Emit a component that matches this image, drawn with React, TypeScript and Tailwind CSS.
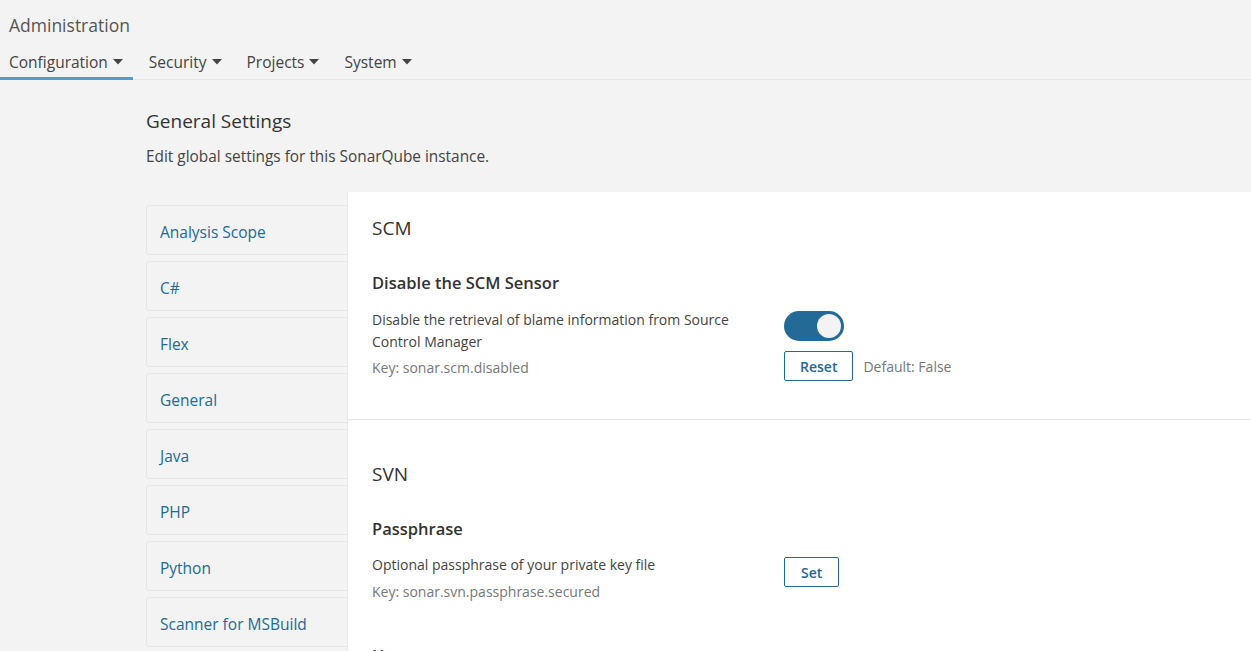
import { useState } from "react";

const categories = [
  "Analysis Scope",
  "C#",
  "Flex",
  "General",
  "Java",
  "PHP",
  "Python",
  "Scanner for MSBuild",
  "SCM",
];

const tabs = ["Configuration", "Security", "Projects", "System"];

function Caret() {
  return (
    <svg width="10" height="6" viewBox="0 0 10 6" className="ml-[5px] inline-block">
      <path d="M0 0 L10 0 L5 5.5 Z" fill="currentColor" />
    </svg>
  );
}

function Toggle() {
  const [on, setOn] = useState(true);
  return (
    <button
      onClick={() => setOn(!on)}
      className={`flex h-[30px] w-[60px] items-center rounded-full px-[3px] ${on ? "justify-end bg-[#236a97]" : "justify-start bg-[#ccc]"}`}
    >
      <span className="h-[24px] w-[24px] rounded-full bg-[#f3f3f3]" />
    </button>
  );
}

export default function App() {
  return (
    <div className="h-[651px] overflow-hidden bg-[#f3f3f3] text-[#444] font-['Open_Sans',sans-serif]">
      {/* Page header */}
      <header className="border-b border-[#e6e6e6]">
        <h1 className="pl-[9px] pt-[12px] text-[17.5px] leading-[26px] text-[#555]">Administration</h1>
        <nav className="mt-[13px] flex text-[15.5px] leading-[22px] text-[#444]">
          {tabs.map((t, i) => (
            <div
              key={t}
              className={`flex items-center ${i === 0 ? "border-b-[3px] border-[#4b9fd5] pl-[9px] pr-[10px] pb-[4px] -mb-px" : i === 1 ? "pl-[16px] pr-[11px] pb-[6px]" : "pl-[14px] pr-[11px] pb-[6px]"}`}
            >
              {t}
              <Caret />
            </div>
          ))}
        </nav>
      </header>

      <div className="pl-[146px]">
        <h2 className="pt-[28px] text-[19px] leading-[26px] text-[#333]">General Settings</h2>
        <p className="mt-[12px] text-[15.4px] leading-[22px] text-[#444]">Edit global settings for this SonarQube instance.</p>

        <div className="mt-[24px] flex">
          {/* Category list */}
          <ul className="mt-[13px] w-[210px] -mr-[9px] flex flex-col gap-[6px]">
            {categories.map((c) => (
              <li
                key={c}
                className="flex h-[50px] items-center rounded-[3px] border border-[#e6e6e6] pl-[13px] pt-[5px] text-[15.5px] text-[#236a97]"
              >
                {c}
              </li>
            ))}
          </ul>

          {/* Settings panel */}
          <div className="relative z-10 flex-1 border-l border-[#e6e6e6] bg-white">
            <section className="border-b border-[#e6e6e6] pb-[38px] pl-[24px] pt-[23px]">
              <h3 className="text-[19px] leading-[26px] text-[#333]">SCM</h3>
              <h4 className="mt-[31px] text-[16.5px] font-semibold leading-[22px] text-[#333]">Disable the SCM Sensor</h4>
              <div className="mt-[15px] flex">
                <div className="w-[412px] text-[14px] leading-[22px]">
                  <p className="w-[390px]">Disable the retrieval of blame information from Source Control Manager</p>
                  <p className="mt-[4px] text-[#777]">Key: sonar.scm.disabled</p>
                </div>
                <div className="flex flex-col items-start gap-[10px] pt-[2px]">
                  <Toggle />
                  <div className="flex items-center gap-[10px]">
                    <button className="h-[30px] rounded-[2px] border border-[#236a97] px-[15px] text-[14px] font-semibold text-[#236a97]">
                      Reset
                    </button>
                    <span className="text-[14px] text-[#777]">Default: False</span>
                  </div>
                </div>
              </div>
            </section>

            <section className="pl-[24px] pt-[41px]">
              <h3 className="text-[19px] leading-[26px] text-[#333]">SVN</h3>
              <h4 className="mt-[31px] text-[16.5px] font-semibold leading-[22px] text-[#333]">Passphrase</h4>
              <div className="mt-[14px] flex">
                <div className="w-[412px] text-[14px] leading-[22px]">
                  <p>Optional passphrase of your private key file</p>
                  <p className="mt-[5px] text-[#777]">Key: sonar.svn.passphrase.secured</p>
                </div>
                <div className="pt-[3px]">
                  <button className="h-[30px] rounded-[2px] border border-[#236a97] px-[16px] text-[14px] font-semibold text-[#236a97]">
                    Set
                  </button>
                </div>
              </div>
              <h4 className="mt-[42px] text-[16.5px] font-semibold leading-[22px] text-[#333]">Username</h4>
            </section>
          </div>
        </div>
      </div>
    </div>
  );
}
